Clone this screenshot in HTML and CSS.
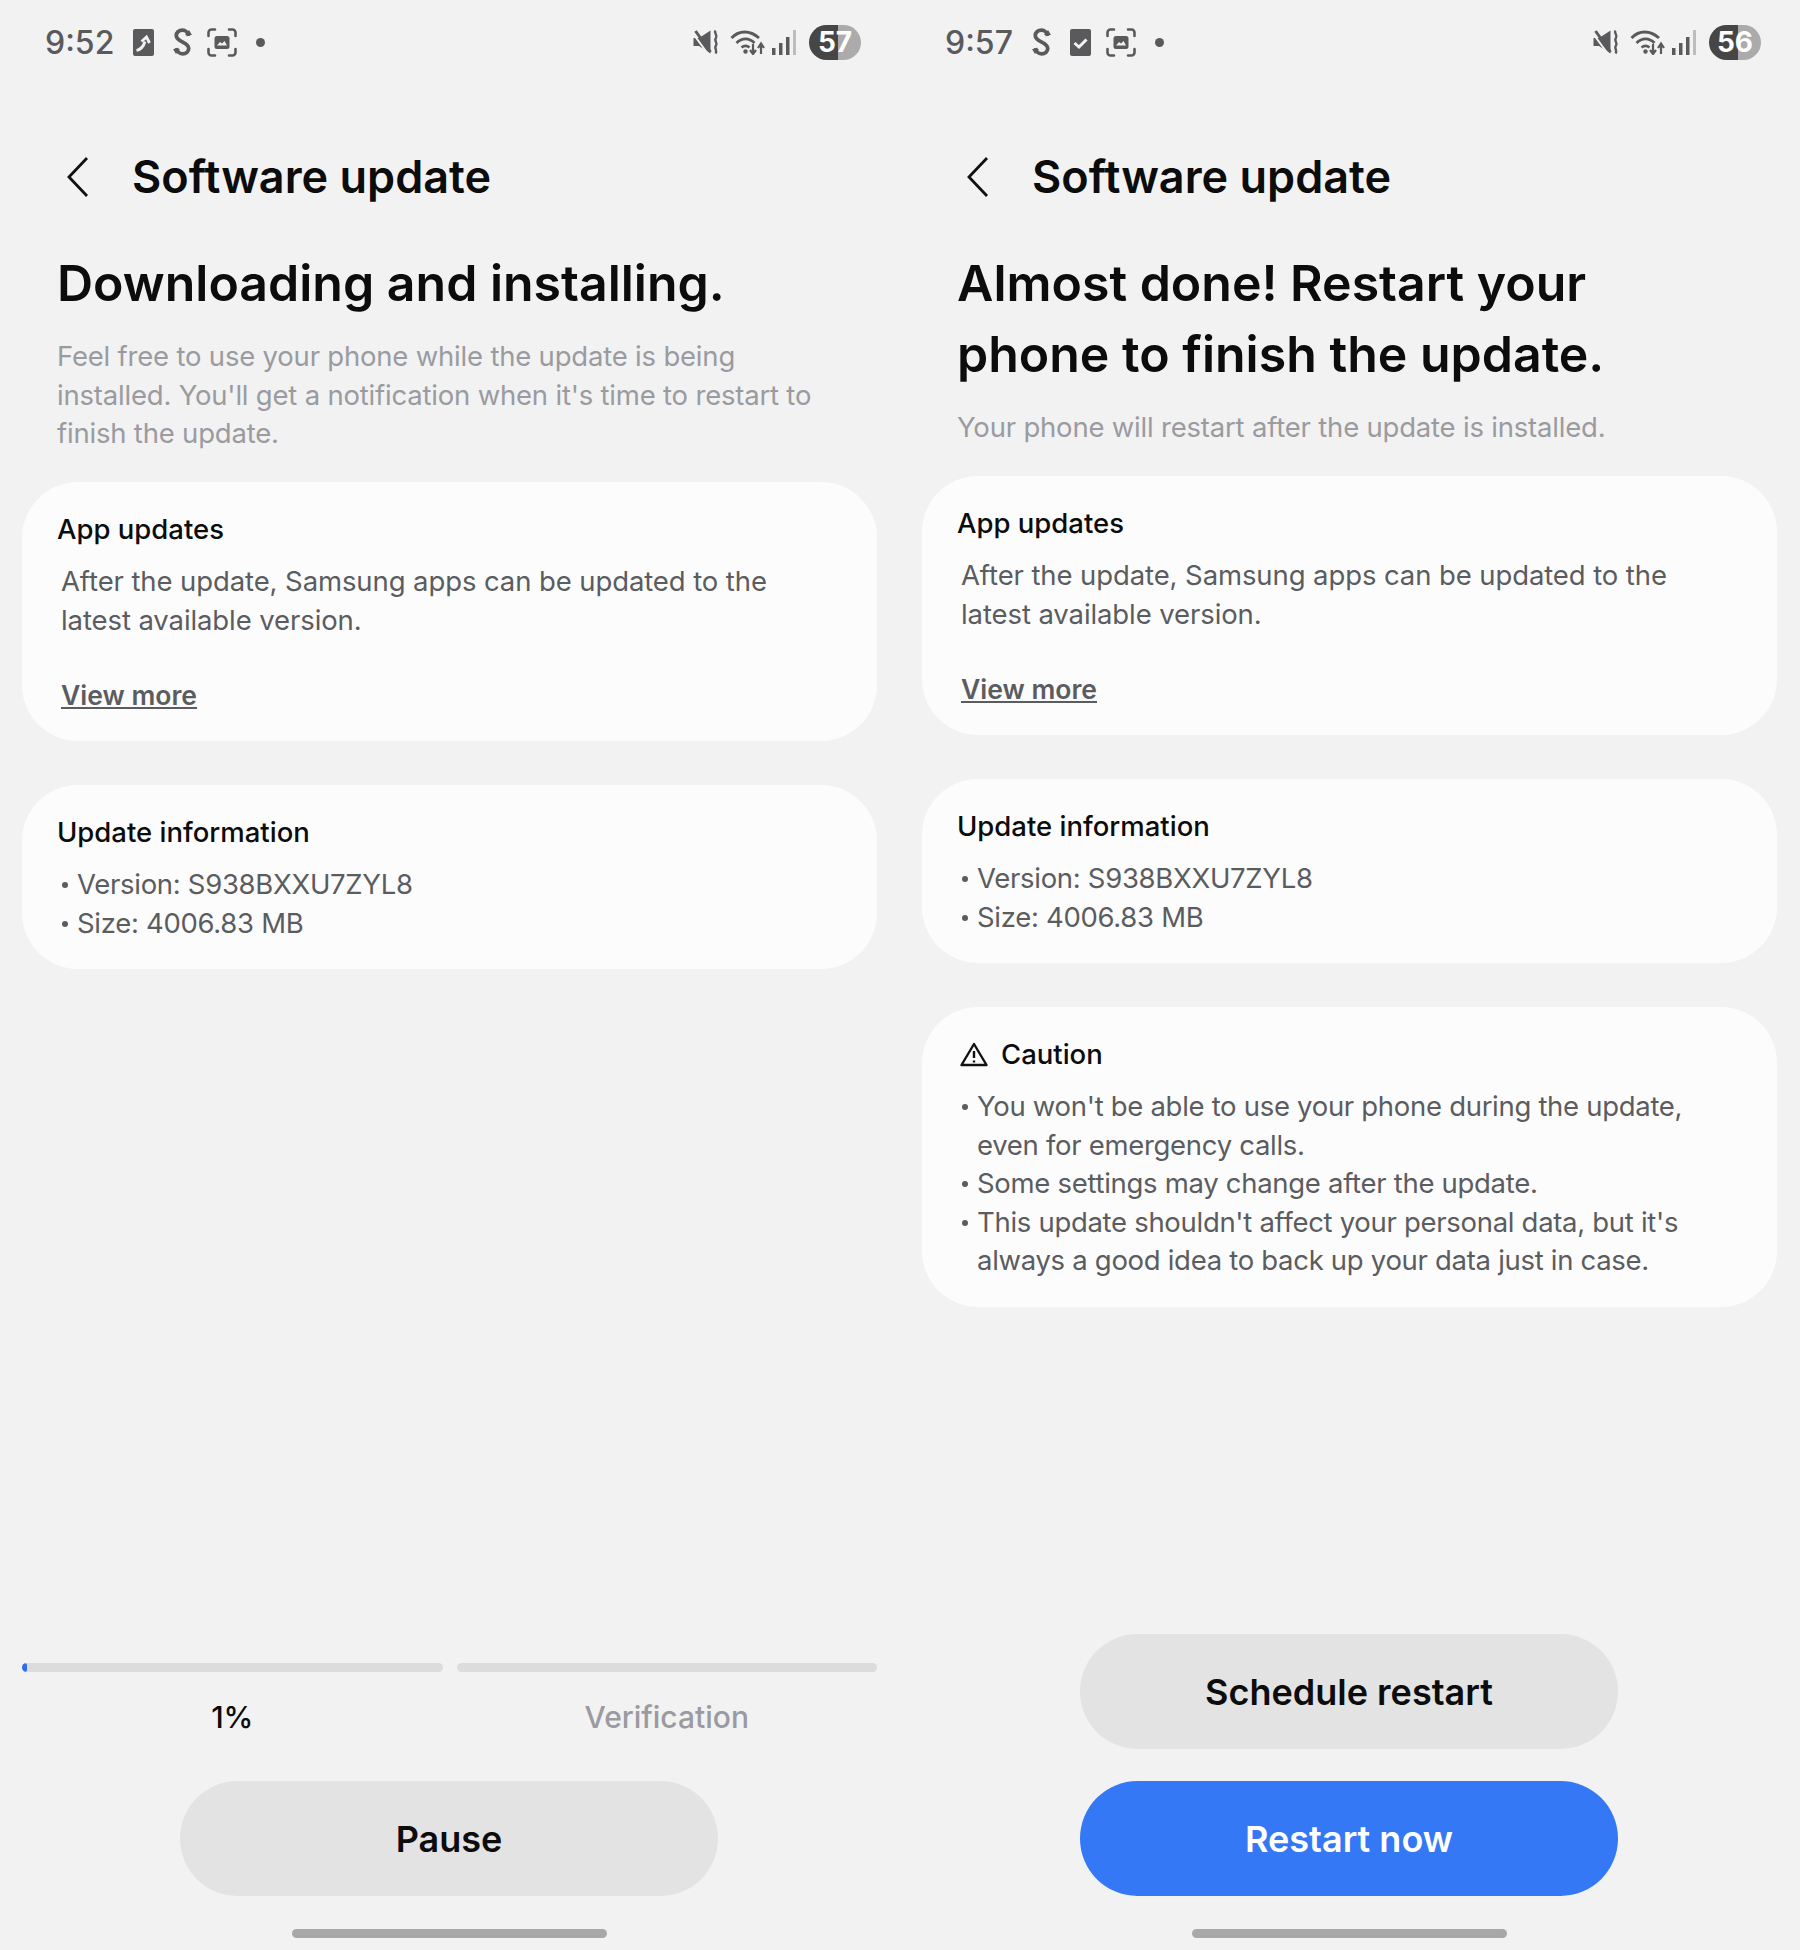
FILE: index.html
```html
<!DOCTYPE html>
<html lang="en">

<head>
    <meta charset="UTF-8">
    <meta name="viewport" content="width=device-width, initial-scale=1.0">
    <title>Software update</title>
    <link rel="stylesheet" href="styles.css">
</head>

<body>
    <svg class="sprites" width="0" height="0">
        <symbol id="i-note" viewBox="0 0 21 27">
            <rect width="21" height="27" rx="2" fill="#5a5a5c" />
            <path d="M3.500 21.500C8 20.500 10.500 17.500 12 12.500" fill="none" stroke="#f2f2f3" stroke-width="2.800" />
            <path d="M8.500 12.500L13.500 8L16.500 14" fill="none" stroke="#f2f2f3" stroke-width="2.800" />
        </symbol>
        <symbol id="i-check" viewBox="0 0 21 27">
            <rect width="21" height="27" rx="2" fill="#5a5a5c" />
            <path d="M4.500 14L9 18L16.500 10.500" fill="none" stroke="#f2f2f3" stroke-width="3" />
        </symbol>
        <symbol id="i-s" viewBox="0 0 19 28">
            <path d="M15.500 8C15 4.500 12.500 2.200 9.500 2.200C5.800 2.200 3.300 4.500 3.300 7.500C3.300 11 6.500 12.500 9.500 14C12.500 15.500 15.700 17 15.700 20.500C15.700 23.500 13.200 25.800 9.500 25.800C6.500 25.800 4 23.500 3.500 20" fill="none" stroke="#5a5a5c" stroke-width="3.800" />
            <path d="M12 7H19L16 2z" fill="#5a5a5c" />
            <path d="M0 21H7L3 26z" fill="#5a5a5c" />
        </symbol>
        <symbol id="i-capture" viewBox="0 0 30 29">
            <path d="M1.500 8V4.500A3 3 0 0 1 4.500 1.500H8M22 1.500H25.500A3 3 0 0 1 28.500 4.500V8M28.500 21V24.500A3 3 0 0 1 25.500 27.500H22M8 27.500H4.500A3 3 0 0 1 1.500 24.500V21" fill="none" stroke="#5a5a5c" stroke-width="2.600" stroke-linecap="round" />
            <rect x="7.500" y="8" width="15" height="13" rx="2.500" fill="#5a5a5c" />
            <path d="M10 17.500L13 14L15 15.500L17.500 13L20 17.500z" fill="#f2f2f3" />
        </symbol>
        <symbol id="i-mute" viewBox="0 0 26 26">
            <path d="M0.500 9H6L17.500 1.500V24.500L6 17H0.500z" fill="#5a5a5c" />
            <path d="M0 4.500L15 25" stroke="#f2f2f3" stroke-width="2" />
            <path d="M2.500 2L17.500 23" stroke="#5a5a5c" stroke-width="3" />
            <path d="M22.500 1.500C20.500 4 25 6 23 9C20.500 11.500 25 13.500 23 16.500C20.500 19 25 21.500 22.500 24.500" fill="none" stroke="#5a5a5c" stroke-width="2.400" />
        </symbol>
        <symbol id="i-wifi" viewBox="0 0 35 26">
            <path d="M1.500 9C9 1 20 1 29 9M6.500 14C12 8.500 19 8.500 24.500 14M11.500 18.500C14 16.500 17 16.500 19.500 18.500" fill="none" stroke="#5a5a5c" stroke-width="2.800" />
            <circle cx="15.500" cy="22.500" r="2.200" fill="#5a5a5c" />
            <path d="M23 15V24M20 21L23 25L26 21M31 25V16M28 19L31 14.500L34 19" fill="none" stroke="#5a5a5c" stroke-width="2.200" />
        </symbol>
        <symbol id="i-signal" viewBox="0 0 24 25">
            <rect x="0" y="18" width="3.500" height="7" fill="#5a5a5c" />
            <rect x="7" y="13" width="3.500" height="12" fill="#5a5a5c" />
            <rect x="14" y="7" width="3.500" height="18" fill="#5a5a5c" />
            <rect x="21" y="0" width="3" height="25" fill="#bdbdbf" />
        </symbol>
    </svg>

    <main class="screens">
        <section class="phone">
            <div class="status-bar">
                <span class="clock">9:52</span>
                <svg class="ic ic-doc"><use href="#i-note" /></svg>
                <svg class="ic ic-s"><use href="#i-s" /></svg>
                <svg class="ic ic-capture"><use href="#i-capture" /></svg>
                <span class="status-dot"></span>
                <div class="status-right">
                    <svg class="ic ic-mute"><use href="#i-mute" /></svg>
                    <svg class="ic ic-wifi"><use href="#i-wifi" /></svg>
                    <svg class="ic ic-signal"><use href="#i-signal" /></svg>
                    <span class="battery">57</span>
                </div>
            </div>

            <div class="app-bar">
                <svg class="back" viewBox="0 0 24 42"><path d="M21 2L3 21L21 40" /></svg>
                <span class="app-title">Software update</span>
            </div>

            <h1 class="headline">Downloading and installing.</h1>
            <p class="lead">Feel free to use your phone while the update is being installed. You'll get a notification when it's time to restart to finish the update.</p>

            <div class="cards">
                <div class="card">
                    <h2>App updates</h2>
                    <p class="card-text">After the update, Samsung apps can be updated to the latest available version.</p>
                    <a class="more" href="#">View more</a>
                </div>
                <div class="card">
                    <h2>Update information</h2>
                    <ul>
                        <li>Version: S938BXXU7ZYL8</li>
                        <li>Size: 4006.83 MB</li>
                    </ul>
                </div>
            </div>

            <div class="bottom">
                <div class="progress">
                    <div class="step">
                        <div class="track"><div class="fill" style="width: 1%"></div></div>
                        <span class="step-label">1%</span>
                    </div>
                    <div class="step">
                        <div class="track"></div>
                        <span class="step-label muted">Verification</span>
                    </div>
                </div>
                <button class="btn">Pause</button>
                <div class="home-bar"></div>
            </div>
        </section>

        <section class="phone">
            <div class="status-bar">
                <span class="clock">9:57</span>
                <svg class="ic ic-s"><use href="#i-s" /></svg>
                <svg class="ic ic-doc"><use href="#i-check" /></svg>
                <svg class="ic ic-capture"><use href="#i-capture" /></svg>
                <span class="status-dot"></span>
                <div class="status-right">
                    <svg class="ic ic-mute"><use href="#i-mute" /></svg>
                    <svg class="ic ic-wifi"><use href="#i-wifi" /></svg>
                    <svg class="ic ic-signal"><use href="#i-signal" /></svg>
                    <span class="battery">56</span>
                </div>
            </div>

            <div class="app-bar">
                <svg class="back" viewBox="0 0 24 42"><path d="M21 2L3 21L21 40" /></svg>
                <span class="app-title">Software update</span>
            </div>

            <h1 class="headline">Almost done! Restart your<br>phone to finish the update.</h1>
            <p class="lead">Your phone will restart after the update is installed.</p>

            <div class="cards">
                <div class="card">
                    <h2>App updates</h2>
                    <p class="card-text">After the update, Samsung apps can be updated to the latest available version.</p>
                    <a class="more" href="#">View more</a>
                </div>
                <div class="card">
                    <h2>Update information</h2>
                    <ul>
                        <li>Version: S938BXXU7ZYL8</li>
                        <li>Size: 4006.83 MB</li>
                    </ul>
                </div>
                <div class="card">
                    <h2 class="caution">
                        <svg class="warn" viewBox="0 0 28 25"><path d="M14 2L26.500 23H1.500z" /><path d="M14 9V16M14 18.500V20.500" /></svg>
                        Caution
                    </h2>
                    <ul>
                        <li>You won't be able to use your phone during the update, even for emergency calls.</li>
                        <li>Some settings may change after the update.</li>
                        <li>This update shouldn't affect your personal data, but it's always a good idea to back up your data just in case.</li>
                    </ul>
                </div>
            </div>

            <div class="bottom">
                <button class="btn">Schedule restart</button>
                <button class="btn primary">Restart now</button>
                <div class="home-bar"></div>
            </div>
        </section>
    </main>
</body>

</html>
```

FILE: styles.css
```css
* {
    padding: 0;
    margin: 0;
    box-sizing: border-box;
}

body {
    font-family: Inter, "Noto Sans", sans-serif;
    background-color: #f2f2f3;
    color: #0c0c0c;
}

.sprites {
    display: block;
}

.screens {
    display: grid;
    grid-template-columns: 900px 900px;
    height: 1950px;
}

.phone {
    display: flex;
    flex-direction: column;
    padding: 0 23px 12px 22px;
    height: 1950px;
}

/* Status bar */
.status-bar {
    display: flex;
    align-items: center;
    height: 84px;
    padding: 0 16px 0 23px;
}

.clock {
    font-size: 32px;
    font-weight: 500;
    color: #5a5a5c;
    margin-right: 19px;
}

.ic {
    display: block;
    flex-shrink: 0;
}

.ic-doc {
    width: 21px;
    height: 27px;
    margin-right: 19px;
}

.ic-s {
    width: 19px;
    height: 28px;
    margin-right: 19px;
}

.ic-capture {
    width: 30px;
    height: 29px;
    margin-left: -4px;
    margin-right: 19px;
}

.status-dot {
    width: 9px;
    height: 9px;
    border-radius: 50%;
    background-color: #5a5a5c;
}

.status-right {
    display: flex;
    align-items: center;
    margin-left: auto;
}

.ic-mute {
    width: 26px;
    height: 26px;
    margin-right: 11px;
}

.ic-wifi {
    width: 35px;
    height: 26px;
    margin-right: 7px;
}

.ic-signal {
    width: 24px;
    height: 25px;
    margin-right: 13px;
}

.battery {
    width: 52px;
    height: 35px;
    border-radius: 18px;
    background: linear-gradient(90deg, #464646 0, #464646 55%, #ababab 55%);
    color: #fff;
    font-size: 28px;
    font-weight: 700;
    line-height: 35px;
    text-align: center;
}

/* Title row */
.app-bar {
    display: flex;
    align-items: center;
    height: 60px;
    margin-top: 63px;
    padding-left: 44px;
    gap: 42px;
}

.back {
    width: 24px;
    height: 42px;
    fill: none;
    stroke: #111;
    stroke-width: 2.800;
}

.app-title {
    font-size: 45px;
    font-weight: 600;
    padding-bottom: 2px;
}

.headline {
    font-size: 50px;
    font-weight: 600;
    line-height: 71px;
    margin-top: 41px;
    padding-left: 35px;
}

.lead {
    font-size: 27.500px;
    letter-spacing: -0.200px;
    line-height: 38.500px;
    color: #9a9ba0;
    margin-top: 18px;
    padding: 0 35px;
}

/* Cards */
.cards {
    display: flex;
    flex-direction: column;
    gap: 44px;
    margin-top: 29.500px;
}

.card {
    background-color: #fcfcfc;
    border-radius: 56px;
    padding: 28px 35px 27px;
}

.card h2 {
    font-size: 27.500px;
    font-weight: 500;
    line-height: 38px;
}

.card-text {
    font-size: 27.500px;
    letter-spacing: -0.100px;
    line-height: 38.500px;
    color: #5b5c60;
    margin-top: 14px;
    padding: 0 4px;
}

.more {
    display: block;
    font-size: 26.500px;
    font-weight: 600;
    line-height: 38px;
    color: #5b5c60;
    margin-top: 37px;
    padding-left: 4px;
}

.card ul {
    list-style: none;
    margin-top: 14px;
}

.card li {
    position: relative;
    font-size: 27.500px;
    letter-spacing: -0.300px;
    line-height: 38.500px;
    color: #5b5c60;
    padding-left: 20px;
}

.card li::before {
    content: "";
    position: absolute;
    left: 5px;
    top: 17px;
    width: 6px;
    height: 6px;
    border-radius: 50%;
    background-color: #5b5c60;
}

.caution {
    display: flex;
    align-items: center;
    gap: 13px;
}

.warn {
    width: 28px;
    height: 25px;
    margin-left: 3px;
    fill: none;
    stroke: #111;
    stroke-width: 2.400;
    stroke-linejoin: round;
}

/* Bottom actions */
.bottom {
    display: flex;
    flex-direction: column;
    align-items: center;
    margin-top: auto;
}

.progress {
    display: flex;
    gap: 14px;
    width: 100%;
    margin-bottom: 45px;
}

.step {
    flex: 1;
    display: flex;
    flex-direction: column;
    align-items: center;
    gap: 26px;
}

.track {
    width: 100%;
    height: 9px;
    border-radius: 5px;
    background-color: #dcdcdc;
    overflow: hidden;
}

.fill {
    height: 100%;
    min-width: 5px;
    border-radius: 5px;
    background-color: #2f6fed;
}

.step-label {
    font-size: 30px;
    font-weight: 500;
    line-height: 38px;
}

.muted {
    color: #9a9ba0;
}

.btn {
    width: 538px;
    height: 115px;
    border: none;
    border-radius: 58px;
    background-color: #e3e3e3;
    color: #0c0c0c;
    font-family: inherit;
    font-size: 36px;
    font-weight: 600;
    margin-right: 1px;
    margin-bottom: 33px;
}

.btn + .btn {
    margin-top: -1px;
}

.primary {
    background-color: #3478f6;
    color: #fff;
}

.home-bar {
    width: 315px;
    height: 9px;
    border-radius: 5px;
    background-color: #a8a8aa;
}
```
